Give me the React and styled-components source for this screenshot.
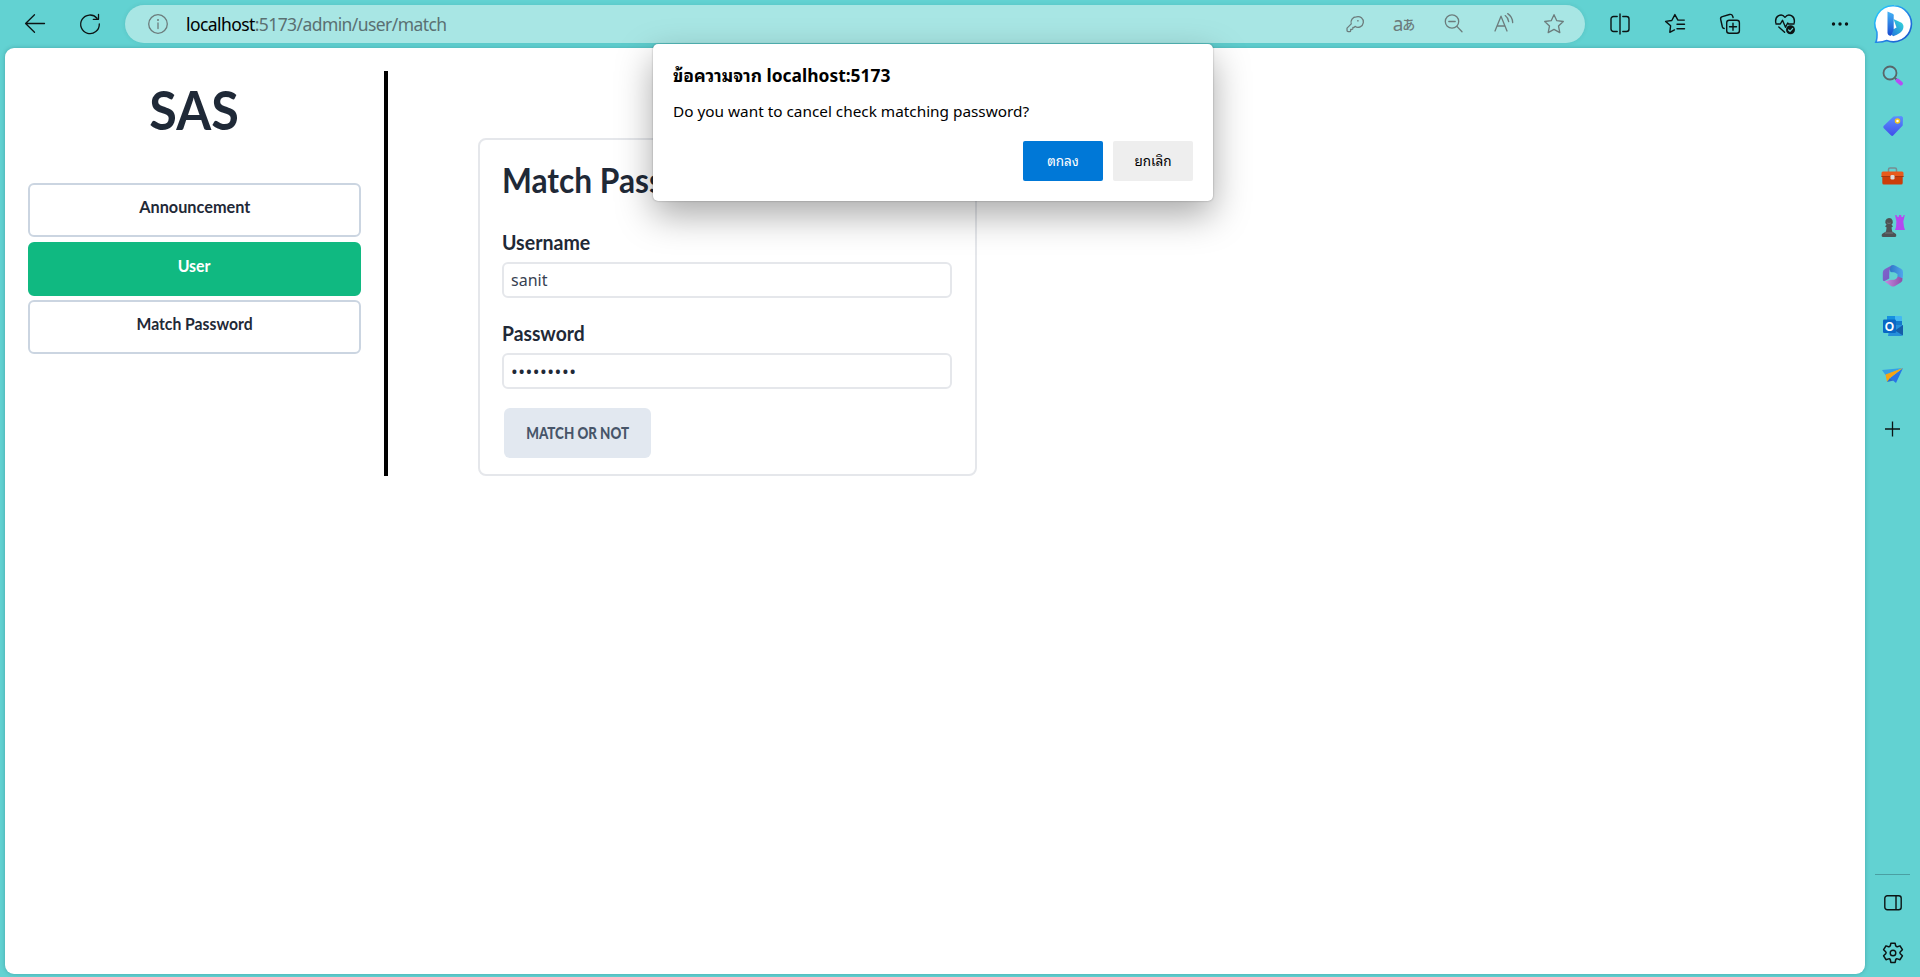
import React from "react";
import styled, { createGlobalStyle } from "styled-components";

const GlobalStyle = createGlobalStyle`
  * { box-sizing: border-box; }
  html, body { margin: 0; height: 100%; overflow: hidden; }
  #root { height: 100%; }
  button, input { font: inherit; }
`;

const ui = `"Noto Sans", "Open Sans", "Noto Sans Thai Looped", "Noto Looped Thai", Loma, Garuda, Waree, "Noto Sans Thai", sans-serif`;
const display = `Lato, "Open Sans", sans-serif`;

const Window = styled.div`
  height: 977px;
  width: 1920px;
  display: flex;
  flex-direction: column;
  background: #62d2d2;
  font-family: ${ui};
  position: relative;
`;

const Toolbar = styled.header`
  height: 48px;
  flex: none;
  display: flex;
  align-items: center;
  color: #0c1414;
`;

const ToolButton = styled.button`
  width: ${(p) => p.$w || 55}px;
  height: 40px;
  margin: 0;
  padding: 0;
  border: 0;
  background: none;
  color: inherit;
  display: flex;
  align-items: center;
  justify-content: center;
  flex: none;
  svg { display: block; overflow: visible; }
`;

const NavTools = styled.div`
  display: flex;
  padding-left: 7px;
  width: 125px;
  height: 41px;
`;

const AddressBar = styled.div`
  width: 1460px;
  height: 38px;
  border-radius: 19px;
  background: #a8e6e4;
  box-shadow: 0 0 4px rgba(0, 80, 80, 0.12);
  display: flex;
  align-items: center;
  color: #6c7c7c;
  padding: 0 6px 0 23px;
`;

const Url = styled.div`
  flex: 1;
  padding-left: 18px;
  font-size: 17.5px;
  line-height: 36px;
  height: 37px;
  letter-spacing: -0.58px;
  color: #5a7072;
  b { font-weight: 400; color: #000; }
`;

const Translate = styled.span`
  display: flex;
  align-items: center;
  font-family: "Noto Sans", sans-serif;
  font-size: 19px;
  line-height: 20px;
  height: 24px;
  white-space: nowrap;
  small {
    font-family: "Noto Sans CJK JP", sans-serif;
    font-size: 13px;
    line-height: 18px;
    font-weight: 500;
    margin-left: -1px;
  }
`;

const EndTools = styled.div`
  display: flex;
  padding-left: 7px;
  align-items: center;
`;

const Body = styled.div`
  flex: 1;
  display: flex;
  padding: 0 0 3px 5px;
`;

const Page = styled.main`
  width: 1860px;
  background: #fff;
  border-radius: 9px;
  box-shadow: 0 0 4px rgba(0, 70, 80, 0.3);
  display: flex;
  align-items: flex-start;
  padding-top: 23px;
  font-family: ${display};
  color: #1f2937;
`;

const SideNav = styled.aside`
  width: 383px;
  height: 405px;
  border-right: 4px solid #000;
  padding: 0 23px;
  display: flex;
  flex-direction: column;
  align-items: stretch;
  gap: 4.5px;
`;

const Squeeze = styled.span`
  display: inline-block;
  transform: scaleX(${(p) => p.$x});
  transform-origin: ${(p) => p.$from || "center"};
  white-space: nowrap;
`;

const Brand = styled.h1`
  margin: 0 0 35.5px;
  height: 72px;
  font-size: 53px;
  line-height: 77px;
  font-weight: 700;
  text-align: center;
`;

const NavItem = styled.a`
  height: 54px;
  flex: none;
  border: 2px solid ${(p) => (p.$active ? "#10b981" : "#cbd5e1")};
  border-radius: 6px;
  background: ${(p) => (p.$active ? "#10b981" : "#fff")};
  color: ${(p) => (p.$active ? "#fff" : "#1f2937")};
  font-size: 17.5px;
  font-weight: 700;
  line-height: 43px;
  text-align: center;
`;

const Card = styled.section`
  margin: 67px 0 0 90px;
  width: 499px;
  height: 338px;
  border: 2px solid #e5e7eb;
  border-radius: 8px;
  padding: 0 22px;
  display: flex;
  flex-direction: column;
  align-items: flex-start;
`;

const CardTitle = styled.h2`
  margin: 18px 0 28px;
  font-size: 35px;
  line-height: 42px;
  height: 42px;
  font-weight: 700;
`;

const Label = styled.label`
  height: 34px;
  font-size: 20.5px;
  line-height: 28px;
  font-weight: 700;
`;

const Input = styled.input`
  width: 450px;
  height: 36px;
  border: 2px solid #e5e7eb;
  border-radius: 6px;
  margin: 0 0 ${(p) => p.$gap}px;
  padding: 0 7px;
  outline: 0;
  color: ${(p) => (p.type === "password" ? "#1f2937" : "#374151")};
  font-family: ${ui};
  font-size: ${(p) => (p.type === "password" ? 18 : 16)}px;
  letter-spacing: ${(p) => p.$tracking || 0}px;
`;

const MatchButton = styled.button`
  margin: 0 0 0 2px;
  width: 147px;
  height: 50px;
  border: 0;
  padding: 0 0 2px;
  border-radius: 6px;
  background: #e2e8f0;
  color: #475569;
  font-size: 16px;
  font-weight: 900;
`;

const Dock = styled.nav`
  width: 55px;
  display: flex;
  flex-direction: column;
  align-items: center;
  padding-top: 3px;
  color: #0c1414;
`;

const DockItem = styled.div`
  height: 50px;
  flex: none;
  display: flex;
  align-items: center;
  justify-content: center;
  svg { display: block; overflow: visible; }
`;

const DockRule = styled.hr`
  margin: auto 0 3px;
  width: 35px;
  border: 0;
  border-top: 1px solid #4a9fa2;
`;

const DockFooter = styled.div`
  height: 96px;
  display: flex;
  flex-direction: column;
`;

const Dialog = styled.div`
  position: absolute;
  left: 653px;
  top: 44px;
  width: 560px;
  height: 157px;
  padding: 19px 20px 20px;
  background: #fff;
  border-radius: 5px;
  box-shadow: 0 0 2px rgba(0, 0, 0, 0.35), 0 14px 36px rgba(0, 0, 0, 0.34);
  display: flex;
  flex-direction: column;
  color: #000;
`;

const DialogTitle = styled.div`
  font-size: 17.5px;
  line-height: 25px;
  font-weight: 700;
  height: 26px;
`;

const DialogText = styled.div`
  margin-top: 9px;
  font-size: 15px;
  line-height: 26px;
  height: 26px;
`;

const DialogActions = styled.div`
  margin-top: 17px;
  display: flex;
  justify-content: flex-end;
  gap: 10px;
`;

const DialogButton = styled.button`
  width: 80px;
  height: 40px;
  border: 0;
  padding: 0 0 2px;
  border-radius: 2px;
  font-size: 13.5px;
  background: ${(p) => (p.$primary ? "#0078d7" : "#eeeeee")};
  color: ${(p) => (p.$primary ? "#fff" : "#000")};
`;

const Line = ({ size = 20, sw = 1.3, children }) => (
  <svg width={size} height={size} viewBox="0 0 20 20" fill="none" stroke="currentColor" strokeWidth={sw} strokeLinecap="round" strokeLinejoin="round">
    {children}
  </svg>
);

const BackIcon = () => <Line><path d="M19.5 9.5H.7M9.5.8.6 9.5l8.9 8.7" /></Line>;
const RefreshIcon = () => <Line><path d="M17 4.2A9.3 9.3 0 1 0 19.3 10M18.5.3v5h-5.2" /></Line>;
const InfoIcon = () => (
  <Line><circle cx="10" cy="10" r="9.3" /><path d="M10 9v5.5" /><circle cx="10" cy="6" r=".5" fill="currentColor" stroke="none" /><circle cx="10" cy="6" r=".35" /></Line>
);
const KeyIcon = () => (
  <Line size={17} sw={1.5}><path d="M12.200 1A6.300 6.300 0 0 0 6.200 9.300L1.200 14.300v2.900q0 1.300 1.300 1.300h1.800q1.200 0 1.200-1.200v-1.500h1.600q1 0 1-1v-1.500h1.500l1-1.100A6.300 6.300 0 1 0 12.200 1Z" /><circle cx="14" cy="5.600" r="1" fill="currentColor" stroke="none" /></Line>
);
const ZoomOutIcon = () => <Line><circle cx="8" cy="7.5" r="6.7" /><path d="M12.9 12.4 18 17.8M4.8 7.5h6.4" /></Line>;
const ReadIcon = () => <Line><path d="M1 17 7 2.2 13 17M3 12h8M11.2 1.6c2 1.5 3.1 3.5 3.5 6M13.7-.4c3 2 4.8 5 5 9" /></Line>;
const StarIcon = () => <Line><path d="m10 .7 2.8 6 6.500.8-4.800 4.500 1.300 6.600-5.800-3.200-5.800 3.200L5.500 12 .7 7.500l6.500-.8Z" /></Line>;
const SplitIcon = () => <Line sw={1.4}><path d="M10 0v20M7.200 2.500H3.500a2.500 2.500 0 0 0-2.500 2.500v10a2.500 2.500 0 0 0 2.500 2.500h3.700M12.800 2.500h3.700A2.500 2.500 0 0 1 19 5v10a2.500 2.500 0 0 1-2.500 2.500h-3.700" /></Line>;
const FavoritesIcon = () => <Line sw={1.4}><path d="M9.500 15.900 4.800 18.300l.8-6.500L.6 7.400l6.200-.9L9.900.6l3 5.500h6.400M12 10.300h7.500M12 14.800h7.500" /></Line>;
const CollectionsIcon = () => (
  <Line sw={1.4}><rect x="6.700" y="6.300" width="12.700" height="13" rx="2.500" /><path d="M13 9.300v7M9.500 12.800h7M4.200 14.500c-1 0-1.500-.6-1.800-1.500L.7 5.500C.3 4 .9 3 2.300 2.600L9.500.5c1.600-.4 2.700.2 3.200 1.700l.4 1.300" /></Line>
);
const HeartIcon = () => (
  <Line sw={1.4}>
    <path d="M.8 8.800C-.5 2 6.500-1.500 10 3.300 13.500-1.500 20.500 2 19.200 8.800M1 10h4.300l2.200-3.700 3 7 2.200-4.300.8 1H19M3.800 13l5.800 5.300" />
    <circle cx="15.500" cy="15.800" r="4.500" fill="currentColor" stroke="none" /><path d="m13.600 16 1.400 1.300 2.600-2.800" stroke="#62d2d2" strokeWidth="1.200" />
  </Line>
);
const DotsIcon = () => <svg width="18" height="18" viewBox="0 0 18 18" fill="currentColor"><circle cx="2.500" cy="9" r="1.700" /><circle cx="9" cy="9" r="1.700" /><circle cx="15.500" cy="9" r="1.700" /></svg>;

const BingIcon = () => (
  <svg width="38" height="38" viewBox="0 0 38 38">
    <defs>
      <linearGradient id="ring" x1="0" y1="0" x2="1" y2="1"><stop offset="0" stopColor="#27d5ff" /><stop offset=".5" stopColor="#258bea" /><stop offset="1" stopColor="#174fc8" /></linearGradient>
      <linearGradient id="stem" x1="0" y1="0" x2="0" y2="1"><stop offset="0" stopColor="#45b4f5" /><stop offset="1" stopColor="#174bd0" /></linearGradient>
      <linearGradient id="bowl" x1="1" y1="0" x2="0" y2="1"><stop offset="0" stopColor="#37e0d8" /><stop offset="1" stopColor="#1f68de" /></linearGradient>
    </defs>
    <path d="M19 .8a18 18 0 1 1-7.300 34.700C8.600 37 5 37.400.8 37.200 2.300 34 2.200 31 1.900 27A18 18 0 0 1 19 .8Z" fill="#fff" stroke="url(#ring)" strokeWidth="1.600" />
    <path d="m18.500 14 7 3.200c3 1.500 3.700 4.200 2.300 7.300-1.500 3.500-5.500 5-9.300 6.700l-5.500-3.700 8.500-5Z" fill="url(#bowl)" />
    <path d="m12.500 6.500 5.200 2.200c.7.300 1 .8 1 1.600v14.200l-2.700 6.200c-2.200.3-3.500-1-3.500-3.200Z" fill="url(#stem)" />
  </svg>
);

const SearchIcon = () => (
  <svg width="22" height="22" viewBox="0 0 22 22"><path d="m13 13 2 2" stroke="#57666a" strokeWidth="2" /><path d="m15.500 15.500 3.500 3" stroke="#b64df5" strokeWidth="4" strokeLinecap="round" /><circle cx="8" cy="8" r="6.500" fill="#70d6df" stroke="#596568" strokeWidth="1.800" /></svg>
);
const TagIcon = () => (
  <svg width="22" height="22" viewBox="0 0 22 22"><defs><linearGradient id="tag" x2="0" y2="1"><stop stopColor="#5b91ff" /><stop offset="1" stopColor="#414eea" /></linearGradient></defs><path d="m11.500 1.500 8-.5 1.500 1.500-.3 8-9.300 9.800q-1.200 1.200-2.500 0L1.800 13.200q-1.200-1.200 0-2.500Z" fill="url(#tag)" /><circle cx="15.500" cy="6" r="2" fill="#fff" stroke="#f4c51d" strokeWidth="1.500" /></svg>
);
const ToolboxIcon = () => (
  <svg width="23" height="22" viewBox="0 0 23 22"><path d="M7.500 7V4.500q0-1.500 1.500-1.500h5q1.500 0 1.500 1.500V7" fill="none" stroke="#778d91" strokeWidth="1.500" /><path d="M2 6.500h19q1.500 0 1.500 1.500v4H.5V8Q.5 6.500 2 6.500Z" fill="#e85a1c" /><path d="M1.300 12h20.400v6q0 1.500-1.500 1.500H2.800q-1.500 0-1.500-1.500Z" fill="#cb3d0a" /><path d="M.5 11.500h22" stroke="#a53510" /><rect x="9.500" y="10" width="4" height="4.500" rx="1.300" fill="#ddd" /></svg>
);
const ChessIcon = () => (
  <svg width="24" height="24" viewBox="0 0 24 24"><path d="m14 1 2 .6.4 1.500 1.300-.2.300-2h2.200l.3 2 1.500.2.400-1.800 1.400-.3-1.500 6.500.7 5.500 1 3H14l1-3 .4-5.500Z" fill="#b449f0" /><path d="M8 4a3.800 3.800 0 0 1 2.500 6.700l1.500 1.600-1.500 1.200.7 4L15 20q.8 3-1 3H2q-2-.2-1-3l4-2.500.6-4L4 12.300l1.600-1.600A3.800 3.800 0 0 1 8 4Z" fill="#4d5255" /><path d="M6 9q2 1 4 0M4 19h8" stroke="#73797c" /></svg>
);
const OfficeIcon = () => (
  <svg width="22" height="22" viewBox="0 0 22 22"><defs><linearGradient id="o1" x2="1" y2="1"><stop stopColor="#8065cd" /><stop offset="1" stopColor="#7558c0" /></linearGradient><linearGradient id="o2"><stop stopColor="#2e78c8" /><stop offset="1" stopColor="#50a5ec" /></linearGradient><linearGradient id="o3"><stop stopColor="#c68be0" /><stop offset="1" stopColor="#8d4daa" /></linearGradient></defs><path d="M9.500.5 3 4Q.8 5.200.8 7.500v7q0 2 1.800 1.500l4.700-2.500V7.500Q7.300 3 12 .3Z" fill="url(#o1)" /><path d="M9.500.5Q7 3.500 8.500 7l7 2v6l4.300-1Q21 13 21 11V7q0-2.200-2-3.300L13 .5q-2-1-3.500 0Z" fill="url(#o2)" /><path d="M20.500 13.200 16 11.500q-1 3-8 3.500l-5.500 1.500 6.500 4.500q2 1 4 0l5.800-3.500q2-1.200 1.700-4.300Z" fill="url(#o3)" /><circle cx="11.300" cy="11" r="3.700" fill="#62d2d2" /></svg>
);
const OutlookGlyph = styled.text`
  font: 700 12px "Liberation Sans", sans-serif;
  fill: #fff;
`;
const OutlookIcon = () => (
  <svg width="22" height="22" viewBox="0 0 22 22"><rect x="5" y="1" width="15" height="11" rx="1" fill="#43b8f2" /><path d="M5 1h8v5H5Z" fill="#1690df" /><path d="M13 6h7v5h-7Z" fill="#1479cc" /><path d="M8 10h13v9q0 2-2 2H6Z" fill="#268eda" /><path d="m21 10-8 5.500 8 5Z" fill="#155da9" /><rect x="1" y="4.500" width="13" height="13.500" rx="1.300" fill="#0967c5" /><OutlookGlyph x="7.500" y="15.500" textAnchor="middle">O</OutlookGlyph></svg>
);
const PlaneIcon = () => (
  <svg width="22" height="22" viewBox="0 0 22 22"><path d="m0 5 21-2L3.500 10Z" fill="#359fe8" /><path d="M21 3 14 18l-6-5Z" fill="#2675e8" /><path d="M3.500 9.500 21 3 8 13l-3 4Z" fill="#f6a313" /><path d="m5 17 3-4 3.500 2.500Z" fill="#2e69c9" /></svg>
);
const PlusIcon = () => <svg width="16" height="16" viewBox="0 0 16 16" stroke="currentColor" strokeWidth="1.300"><path d="M7.500.5v15M0 8h15" /></svg>;
const PanelIcon = () => <svg width="18" height="16" viewBox="0 0 18 16" fill="none" stroke="currentColor" strokeWidth="1.400"><rect x=".8" y=".8" width="16.400" height="14" rx="2.500" /><path d="M12 1v14" /></svg>;
const GearIcon = () => (
  <Line sw={1.400}><path d="m8 .2-.5 2.400q-.4 1.100-1.600.8l-2.400-.8L1.300 6.200l1.900 1.900q.9.900 0 2l-1.900 1.900 2.200 3.700 2.400-.8q1.200-.3 1.600.8l.5 2.500h4l.5-2.500q.4-1.100 1.600-.8l2.400.8 2.200-3.700-1.900-1.900q-.9-1.100 0-2l1.900-1.900-2.200-3.600-2.400.8q-1.200.3-1.600-.8L12 .2Z" transform="matrix(1.080 0 0 1.060 -.8 .1)" /><circle cx="10" cy="10" r="2.800" /></Line>
);

const addressTools = [KeyIcon, null, ZoomOutIcon, ReadIcon, StarIcon];
const endTools = [SplitIcon, FavoritesIcon, CollectionsIcon, HeartIcon, DotsIcon];
const dockApps = [SearchIcon, TagIcon, ToolboxIcon, ChessIcon, OfficeIcon, OutlookIcon, PlaneIcon];

const DockTop = styled.div`
  display: flex;
  flex-direction: column;
  align-items: center;
`;
const DockAdd = styled(DockItem)`
  height: 56px;
`;

export default function App() {
  return (
    <>
      <GlobalStyle />
      <Window>
        <Toolbar>
          <NavTools>
            <ToolButton><BackIcon /></ToolButton>
            <ToolButton><RefreshIcon /></ToolButton>
          </NavTools>
          <AddressBar>
            <InfoIcon />
            <Url><b>localhost</b>:5173/admin/user/match</Url>
            {addressTools.map((Icon, i) => (
              <ToolButton key={i} $w={50}>
                {Icon ? <Icon /> : <Translate>a<small>あ</small></Translate>}
              </ToolButton>
            ))}
          </AddressBar>
          <EndTools>
            {endTools.map((Icon, i) => <ToolButton key={i}><Icon /></ToolButton>)}
            <ToolButton $w={53}><BingIcon /></ToolButton>
          </EndTools>
        </Toolbar>
        <Body>
          <Page>
            <SideNav>
              <Brand><Squeeze $x={0.95}>SAS</Squeeze></Brand>
              <NavItem><Squeeze $x={0.93}>Announcement</Squeeze></NavItem>
              <NavItem $active><Squeeze $x={0.91}>User</Squeeze></NavItem>
              <NavItem><Squeeze $x={0.9}>Match Password</Squeeze></NavItem>
            </SideNav>
            <Card>
              <CardTitle><Squeeze $x={0.905} $from="left">Match Password</Squeeze></CardTitle>
              <Label><Squeeze $x={0.955} $from="left">Username</Squeeze></Label>
              <Input defaultValue="sanit" $gap={21} />
              <Label><Squeeze $x={0.94} $from="left">Password</Squeeze></Label>
              <Input type="password" defaultValue="123456789" $gap={19} $tracking={0.5} />
              <MatchButton><Squeeze $x={0.835}>MATCH OR NOT</Squeeze></MatchButton>
            </Card>
          </Page>
          <Dock>
            <DockTop>
              {dockApps.map((Icon, i) => <DockItem key={i}><Icon /></DockItem>)}
              <DockAdd><PlusIcon /></DockAdd>
            </DockTop>
            <DockRule />
            <DockFooter>
              <DockItem><PanelIcon /></DockItem>
              <DockItem><GearIcon /></DockItem>
            </DockFooter>
          </Dock>
        </Body>
        <Dialog>
          <DialogTitle><Squeeze $x={0.995} $from="left">ข้อความจาก localhost:5173</Squeeze></DialogTitle>
          <DialogText><Squeeze $x={1.022} $from="left">Do you want to cancel check matching password?</Squeeze></DialogText>
          <DialogActions>
            <DialogButton $primary>ตกลง</DialogButton>
            <DialogButton>ยกเลิก</DialogButton>
          </DialogActions>
        </Dialog>
      </Window>
    </>
  );
}
